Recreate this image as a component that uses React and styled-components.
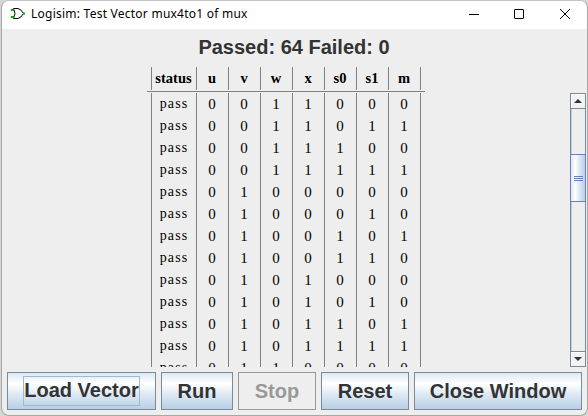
import React from "react";
import styled, { createGlobalStyle } from "styled-components";

const Global = createGlobalStyle`
  * { box-sizing: border-box; }
  body { margin: 0; background: #d6d6d6; overflow: hidden; }
`;

const Window = styled.div`
  width: 587px;
  height: 416px;
  margin-left: 1px;
  border: 1px solid #a6a6a6;
  border-top-color: #c4c4c4;
  border-radius: 8px;
  background: #eee;
  overflow: hidden;
  display: flex;
  flex-direction: column;
`;

const TitleBar = styled.header`
  height: 28px;
  flex: none;
  background: #fff;
  display: flex;
  align-items: center;
  padding: 0 17px 2px 9px;
`;

const Title = styled.span`
  flex: 1;
  margin-left: 5px;
  font: 12px/16px "Noto Sans", sans-serif;
  letter-spacing: 0.24px;
  color: #000;
  white-space: nowrap;
`;

const Controls = styled.div`
  display: flex;
  gap: 35px;
`;

const CloseIcon = styled.svg`
  margin-left: 1px;
`;

const Summary = styled.h1`
  margin: 0;
  height: 37px;
  flex: none;
  padding: 7px 1px 0 0;
  text-align: center;
  font: bold 20px/23px "Liberation Sans", Arial, sans-serif;
  color: #333;
`;

const Results = styled.main`
  display: flex;
  height: 301px;
  flex: none;
`;

const TableArea = styled.div`
  flex: 1;
  display: flex;
  flex-direction: column;
  align-items: center;
`;

const HeaderWrap = styled.div`
  width: 278px;
  height: 26px;
  padding: 1px 4px 0;
  margin-bottom: 1px;
  border-bottom: 1px solid #808080;
  flex: none;
`;

const BodyWrap = styled.div`
  width: 270px;
  height: 274px;
  overflow: hidden;
`;

const Row = styled.div`
  display: grid;
  grid-template-columns: 45px repeat(7, 32px);
  width: 270px;
  height: ${(p) => (p.$head ? 23 : 22)}px;
  border-left: 1px solid #808080;
`;

const Cell = styled.span`
  border-right: 1px solid #808080;
  text-align: center;
  font: ${(p) => (p.$bold ? "bold 14.5px" : "15px")}/22px "Liberation Serif", "Times New Roman", serif;
  color: #000;
  padding-right: 1px;
  white-space: nowrap;
`;

const Status = styled(Cell)`
  font-size: 14px;
  letter-spacing: 1.1px;
  padding-right: 0;
`;

const Scrollbar = styled.div`
  width: 16px;
  height: 274px;
  margin: 27px 1px 0 0;
  border: 1px solid #7a8a99;
  display: flex;
  flex-direction: column;
  box-shadow: inset 1px 0 #b8cfe5;
`;

const Arrow = styled.div`
  height: 15px;
  flex: none;
  display: grid;
  place-items: center;
  border: solid #7a8a99;
  border-width: ${(p) => (p.$down ? "1px 0 0" : "0 0 1px")};
  background: #f2f2f2;
  box-shadow: inset 1px 1px #fff;
`;

const Track = styled.div`
  flex: 1;
  padding-top: 45px;
`;

const Thumb = styled.div`
  height: 48px;
  margin: 0 -1px;
  border: 1px solid #6382bf;
  background: linear-gradient(90deg, #dde8f3, #fff 30%, #dde8f3 60%, #b8cfe5);
  display: flex;
  flex-direction: column;
  justify-content: center;
  align-items: center;
  gap: 1px;
`;

const Grip = styled.i`
  width: 9px;
  height: 1px;
  background: #6382bf;
`;

const ButtonBar = styled.footer`
  display: flex;
  gap: 5px;
  padding: 5px 0 0 5px;
`;

const Button = styled.button`
  width: ${(p) => p.$width}px;
  height: 38px;
  padding: 0;
  border: 1px solid #7a8a99;
  border-radius: 0;
  background: linear-gradient(#dde8f3, #fff 30%, #dde8f3 60%, #b8cfe5);
  color: #333;
  font: bold 20px/28px "Liberation Sans", Arial, sans-serif;
  white-space: nowrap;
  &:disabled {
    color: #999;
    border-color: #999;
    background: #eee;
  }
`;

const FocusRing = styled.span`
  display: inline-block;
  height: 30px;
  outline: 1px solid #a3b8cc;
  outline-offset: -1px;
  padding: 0 1px;
`;

const columns = ["u", "v", "w", "x", "s0", "s1", "m"];
const vectors = [
  "0011000", "0011011", "0011100", "0011111", "0100000", "0100010",
  "0100101", "0100110", "0101000", "0101010", "0101101", "0101111", "0110000",
];

export default function App() {
  return (
    <>
      <Global />
      <Window>
        <TitleBar>
          <svg width="15" height="14" viewBox="0 0 15 14" fill="none">
            <path d="M2.5 1.5H7Q10.5 2.5 12.5 6.5Q10.5 10.5 7 11.5H2.5Q5.5 6.5 2.5 1.5" stroke="#000" />
            <path d="M0 2h3v2H0zM0 9h3v2H0zM12 5.5h2v2h-2z" fill="#0a0" />
          </svg>
          <Title>Logisim: Test Vector mux4to1 of mux</Title>
          <Controls>
            <svg width="10" height="10"><path d="M0 5.5h10" stroke="#000" /></svg>
            <svg width="10" height="10"><rect x=".5" y=".5" width="9" height="9" rx=".5" fill="none" stroke="#000" /></svg>
            <CloseIcon width="10" height="10"><path d="M0 0l10 10M10 0L0 10" stroke="#000" /></CloseIcon>
          </Controls>
        </TitleBar>
        <Summary>Passed: 64 Failed: 0</Summary>
        <Results>
          <TableArea>
            <HeaderWrap>
              <Row $head>
                <Cell $bold>status</Cell>
                {columns.map((c) => <Cell $bold key={c}>{c}</Cell>)}
              </Row>
            </HeaderWrap>
            <BodyWrap>
              {vectors.map((v) => (
                <Row key={v}>
                  <Status>pass</Status>
                  {[...v].map((bit, i) => <Cell key={i}>{bit}</Cell>)}
                </Row>
              ))}
            </BodyWrap>
          </TableArea>
          <Scrollbar>
            <Arrow><svg width="8" height="4"><path d="M4 0L8 4H0z" fill="#333" /></svg></Arrow>
            <Track><Thumb><Grip /><Grip /><Grip /></Thumb></Track>
            <Arrow $down><svg width="8" height="4"><path d="M0 0h8L4 4z" fill="#333" /></svg></Arrow>
          </Scrollbar>
        </Results>
        <ButtonBar>
          <Button $width={149}><FocusRing>Load Vector</FocusRing></Button>
          <Button $width={72}>Run</Button>
          <Button $width={78} disabled>Stop</Button>
          <Button $width={88}>Reset</Button>
          <Button $width={168}>Close Window</Button>
        </ButtonBar>
      </Window>
    </>
  );
}
